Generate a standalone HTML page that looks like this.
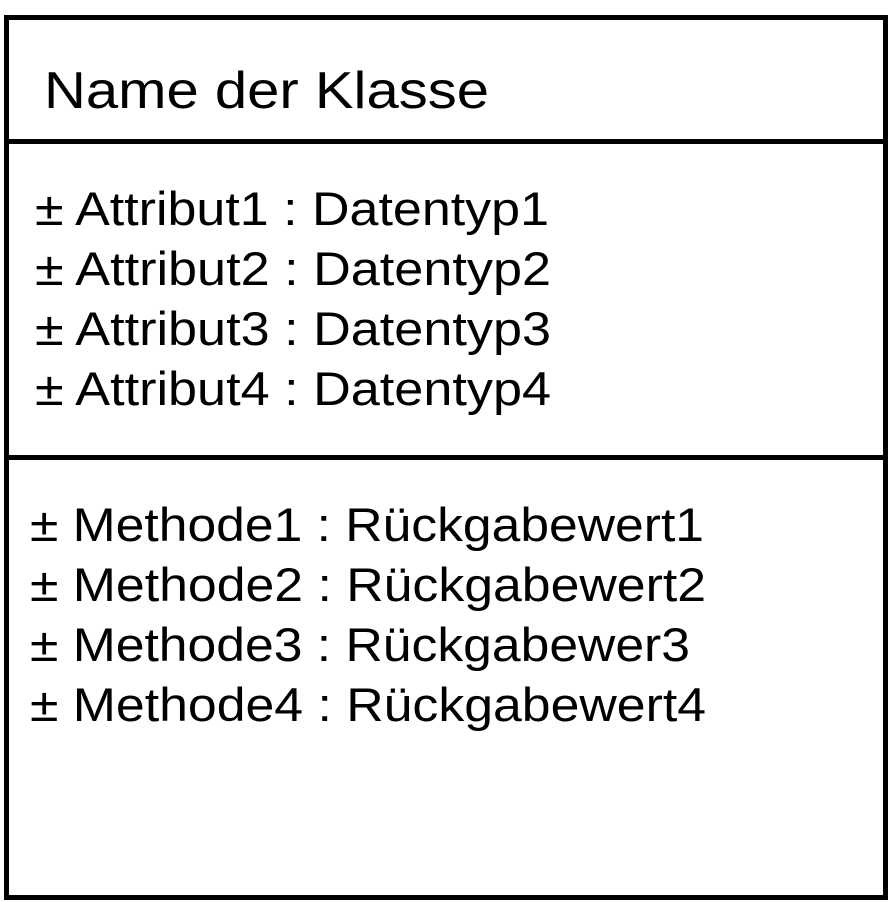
<!DOCTYPE html>
<html><head><meta charset="utf-8"><style>
html,body{margin:0;padding:0;background:#fff;width:890px;height:902px;overflow:hidden}
svg text{font-family:"Liberation Sans",Arial,sans-serif;fill:#000}
</style></head><body>
<svg width="890" height="902" viewBox="0 0 890 902" xmlns="http://www.w3.org/2000/svg">
<rect x="6.5" y="17.5" width="879" height="880" fill="none" stroke="#000" stroke-width="5"/>
<line x1="4" y1="141.5" x2="888" y2="141.5" stroke="#000" stroke-width="5"/>
<line x1="4" y1="457.5" x2="888" y2="457.5" stroke="#000" stroke-width="5"/>
<text x="44" y="108" font-size="52" textLength="445" lengthAdjust="spacingAndGlyphs">Name der Klasse</text>
<g font-size="47">
<text x="35" y="225" textLength="514" lengthAdjust="spacingAndGlyphs">± Attribut1 : Datentyp1</text>
<text x="35" y="285" textLength="516" lengthAdjust="spacingAndGlyphs">± Attribut2 : Datentyp2</text>
<text x="35" y="345" textLength="516" lengthAdjust="spacingAndGlyphs">± Attribut3 : Datentyp3</text>
<text x="35" y="405" textLength="516" lengthAdjust="spacingAndGlyphs">± Attribut4 : Datentyp4</text>
<text x="30" y="541" textLength="674" lengthAdjust="spacingAndGlyphs">± Methode1 : Rückgabewert1</text>
<text x="30" y="601" textLength="676" lengthAdjust="spacingAndGlyphs">± Methode2 : Rückgabewert2</text>
<text x="30" y="661" textLength="660" lengthAdjust="spacingAndGlyphs">± Methode3 : Rückgabewer3</text>
<text x="30" y="721" textLength="676" lengthAdjust="spacingAndGlyphs">± Methode4 : Rückgabewert4</text>
</g>
</svg>
</body></html>
